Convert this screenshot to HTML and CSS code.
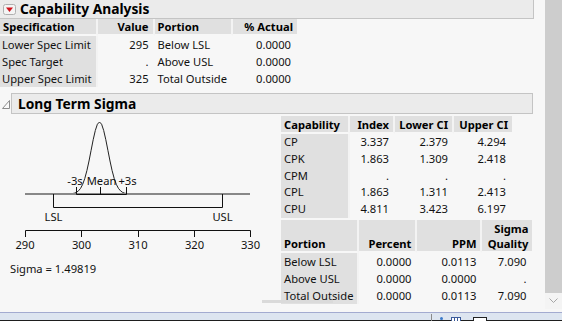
FILE: index.html
```html
<!DOCTYPE html>
<html>
<head>
<meta charset="utf-8">
<link rel="stylesheet" href="styles.css">
</head>
<body>
<div class="window">
  <div class="content">
    <div class="ohead top-head">
      <span class="red-btn"><svg width="13" height="11" viewBox="0 0 13 11"><rect x="0.5" y="0.5" width="12" height="10" rx="2" fill="#f4f4f4" stroke="#b0b0b0"/><path d="M3 3.5 L10 3.5 L6.5 8 Z" fill="#d0141e"/></svg></span>
      <span class="title">Capability Analysis</span>
    </div>
    <table class="grid spec">
      <thead>
        <tr><th class="l w97">Specification</th><th class="r w57">Value</th><th class="l w78">Portion</th><th class="r w64 last">% Actual</th></tr>
      </thead>
      <tbody>
        <tr><td class="lab">Lower Spec Limit</td><td class="r">295</td><td class="l">Below LSL</td><td class="r">0.0000</td></tr>
        <tr><td class="lab">Spec Target</td><td class="r">.</td><td class="l">Above USL</td><td class="r">0.0000</td></tr>
        <tr><td class="lab">Upper Spec Limit</td><td class="r">325</td><td class="l">Total Outside</td><td class="r">0.0000</td></tr>
      </tbody>
    </table>

    <div class="sub">
      <div class="sub-row">
        <span class="disc"><svg width="8" height="9" viewBox="0 0 8 9"><path d="M7.5 0.5 L7.5 8.5 L0.5 8.5 Z" fill="#fafafa" stroke="#8c8c8c"/></svg></span>
        <div class="ohead sub-head"><span class="title">Long Term Sigma</span></div>
      </div>
      <div class="sigma-body">
        <div class="left">
          <svg class="chart" width="281" height="140" viewBox="0 113 281 140">
            <polyline fill="none" stroke="#222" stroke-width="1" points="70.1,192.8 72.2,192.6 74.3,192.2 76.4,191.4 78.5,189.8 80.6,187.3 82.7,183.3 84.8,177.4 86.9,169.6 89,160 91.1,149.3 93.2,138.7 95.3,129.5 97.4,123.2 99.5,121 101.6,123.2 103.7,129.5 105.8,138.7 107.9,149.3 110,160 112.1,169.6 114.2,177.4 116.3,183.3 118.4,187.3 120.5,189.8 122.6,191.4 124.7,192.2 126.8,192.6 128.9,192.8"/>
            <line x1="25" y1="193" x2="250" y2="193" stroke="#888" stroke-width="2"/>
            <path d="M76.5 186 V193.5 H126.5 V186 M100.5 186 V193.5" fill="none" stroke="#111" stroke-width="1"/>
            <text x="75" y="184" class="ct" text-anchor="middle">-3s</text>
            <text x="101.5" y="184" class="ct" text-anchor="middle">Mean</text>
            <text x="127.5" y="184" class="ct" text-anchor="middle">+3s</text>
            <path d="M53.5 193 V206.5 H222.5 V193" fill="none" stroke="#111" stroke-width="1"/>
            <text x="53.5" y="220" class="ct" text-anchor="middle">LSL</text>
            <text x="222.5" y="220" class="ct" text-anchor="middle">USL</text>
            <path d="M25.5 236 V229.5 H250.5 V236 M81.5 229.5 V236 M138.5 229.5 V236 M194.5 229.5 V236" fill="none" stroke="#111" stroke-width="1"/>
            <text x="25" y="248" class="ct" text-anchor="middle">290</text>
            <text x="81.5" y="248" class="ct" text-anchor="middle">300</text>
            <text x="138" y="248" class="ct" text-anchor="middle">310</text>
            <text x="194.5" y="248" class="ct" text-anchor="middle">320</text>
            <text x="250.5" y="248" class="ct" text-anchor="middle">330</text>
          </svg>
          <div class="sigma">Sigma = 1.49819</div>
        </div>
        <div class="right">
          <table class="grid cap">
            <thead>
              <tr><th class="l w69">Capability</th><th class="r w45">Index</th><th class="r w59">Lower CI</th><th class="r w58 last">Upper CI</th></tr>
            </thead>
            <tbody>
              <tr><td class="lab">CP</td><td class="r">3.337</td><td class="r">2.379</td><td class="r">4.294</td></tr>
              <tr><td class="lab">CPK</td><td class="r">1.863</td><td class="r">1.309</td><td class="r">2.418</td></tr>
              <tr><td class="lab">CPM</td><td class="r">.</td><td class="r">.</td><td class="r">.</td></tr>
              <tr><td class="lab">CPL</td><td class="r">1.863</td><td class="r">1.311</td><td class="r">2.413</td></tr>
              <tr><td class="lab">CPU</td><td class="r">4.811</td><td class="r">3.423</td><td class="r">6.197</td></tr>
            </tbody>
          </table>
          <table class="grid port">
            <thead>
              <tr><th class="l w78">Portion</th><th class="r w58">Percent</th><th class="r w65">PPM</th><th class="r w50 last">Sigma<br>Quality</th></tr>
            </thead>
            <tbody>
              <tr><td class="lab">Below LSL</td><td class="r">0.0000</td><td class="r">0.0113</td><td class="r">7.090</td></tr>
              <tr><td class="lab">Above USL</td><td class="r">0.0000</td><td class="r">0.0000</td><td class="r">.</td></tr>
              <tr><td class="lab">Total Outside</td><td class="r">0.0000</td><td class="r">0.0113</td><td class="r">7.090</td></tr>
            </tbody>
          </table>
        </div>
      </div>
    </div>
    <div class="hthumb"></div>
  </div>
  <div class="vscroll">
    <div class="thumb"></div>
    <div class="arrow"><svg width="9" height="6" viewBox="0 0 9 6"><path d="M0.5 0.5 L4.5 4.5 L8.5 0.5" fill="none" stroke="#a6a6a6" stroke-width="1"/></svg></div>
    <div class="tail"></div>
  </div>
</div>
<div class="status">
  <div class="status-fill">
    <span class="sep"></span>
    <span class="dot"></span>
    <span class="gridicon"></span>
    <span class="boxicon"></span>
  </div>
</div>
</body>
</html>
```

FILE: styles.css
```css
html, body {
  margin: 0;
  padding: 0;
}
body {
  width: 562px;
  height: 321px;
  overflow: hidden;
  background: #f7f7f7;
  font-family: "Noto Sans", "Open Sans", sans-serif;
  font-size: 11.2px;
  color: #111;
}
.window {
  display: flex;
  height: 312px;
}
.content {
  width: 545px;
  height: 312px;
  position: relative;
  overflow: hidden;
}
.ohead {
  display: flex;
  align-items: center;
  box-sizing: border-box;
  background: #ebebeb;
  border: 1px solid #c4c4c4;
}
.top-head {
  width: 534px;
  height: 19px;
  border-top: none;
  border-left: none;
  padding-left: 3px;
}
.red-btn {
  display: flex;
  width: 13px;
  height: 11px;
  margin-right: 4px;
  margin-top: 1px;
}
.title {
  font-weight: bold;
  font-size: 13.8px;
  line-height: 18px;
  color: #000;
}
.grid {
  border-collapse: separate;
  border-spacing: 0;
  table-layout: fixed;
}
.grid th, .grid td {
  box-sizing: border-box;
  padding: 0 4px 0 3px;
  white-space: nowrap;
  overflow: hidden;
}
.grid th {
  background: #e0e0e0;
  font-weight: bold;
  color: #000;
  height: 17px;
  line-height: 15px;
  border-right: 2px solid #f3f3f3;
  border-bottom: 2px solid #f7f7f7;
  vertical-align: bottom;
}
.grid th.last {
  border-right: none;
}
.grid td {
  height: 17px;
  line-height: 17px;
  border-right: 2px solid transparent;
}
.grid td.lab {
  background: #e0e0e0;
  border-right: 2px solid #f3f3f3;
}
.l { text-align: left; }
.r { text-align: right; }
.w97 { width: 97px; }
.w57 { width: 57px; }
.w78 { width: 78px; }
.w64 { width: 64px; }
.w69 { width: 69px; }
.w45 { width: 45px; }
.w59 { width: 59px; }
.w58 { width: 58px; }
.w65 { width: 65px; }
.w50 { width: 50px; }
.spec td.lab { padding-left: 2px; }

.sub {
  margin-top: 6px;
}
.sub-row {
  display: flex;
  align-items: center;
}
.disc {
  display: flex;
  width: 8px;
  height: 9px;
  margin-left: 2px;
  margin-right: 1px;
  margin-top: 2px;
}
.sub-head {
  width: 522px;
  height: 21px;
  padding-left: 6px;
}
.sigma-body {
  display: flex;
  margin-top: 2px;
}
.left {
  width: 281px;
  display: flex;
  flex-direction: column;
  margin-top: -2px;
}
.chart {
  display: block;
}
.ct {
  font-family: "Noto Sans", "Open Sans", sans-serif;
  font-size: 11.2px;
  fill: #111;
}
.sigma {
  margin-top: 7px;
  padding-left: 10px;
  line-height: 16px;
}
.right {
  display: flex;
  flex-direction: column;
  align-items: flex-start;
}
.cap th { height: 18px; }
.port {
  margin-top: 2px;
}
.port th {
  height: 33px;
}
.port td { height: 17px; }
.cap td { height: 16.75px; line-height: 16.75px; }

.hthumb {
  position: absolute;
  left: 262px;
  top: 300px;
  width: 71px;
  height: 3px;
  background: #dadada;
}
.vscroll {
  width: 17px;
  display: flex;
  flex-direction: column;
  background: #f0f0f0;
}
.vscroll .thumb {
  height: 293px;
  background: #cdcdcd;
}
.vscroll .arrow {
  height: 16px;
  display: flex;
  align-items: center;
  justify-content: center;
  background: #f4f4f4;
}
.vscroll .tail {
  flex: 1;
  background: #f7f7f7;
}
.status {
  height: 9px;
  border-top: 1px solid #a3abd0;
  box-sizing: border-box;
  background: #1e1e1e;
}
.status-fill {
  height: 7px;
  background: #dde5f0;
  position: relative;
}
.status-fill .sep {
  position: absolute;
  left: 431px;
  top: 1px;
  width: 1px;
  height: 7px;
  background: #8a8a8a;
}
.status-fill .dot {
  position: absolute;
  left: 440px;
  top: 4px;
  width: 3px;
  height: 3px;
  background: #3a78c8;
  border-radius: 50%;
}
.status-fill .gridicon {
  position: absolute;
  left: 451px;
  top: 4px;
  width: 10px;
  height: 3px;
  border-top: 1px solid #3a5a9a;
  background: repeating-linear-gradient(90deg, #3a5a9a 0 1px, #ffffff 1px 3px);
}
.status-fill .boxicon {
  position: absolute;
  left: 473px;
  top: 4px;
  width: 12px;
  height: 4px;
  border: 1px solid #222;
  border-bottom: none;
  background: #fff;
}
```
